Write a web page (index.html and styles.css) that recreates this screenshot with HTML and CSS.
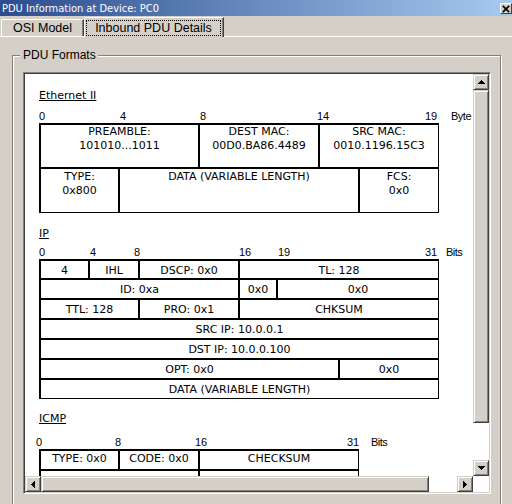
FILE: index.html
```html
<!DOCTYPE html>
<html>
<head>
<meta charset="utf-8">
<title>PDU Information at Device: PC0</title>
<link rel="stylesheet" href="styles.css">
</head>
<body>
<div class="titlebar">
  <span class="title">PDU Information at Device: PC0</span>
  <span class="close"><svg width="8" height="8" viewBox="0 0 8 8"><path d="M0.8 0.8 L7.2 7.2 M7.2 0.8 L0.8 7.2" stroke="#000" stroke-width="1.7"/></svg></span>
</div>
<div class="tabs">
  <div class="tab">OSI Model</div>
  <div class="tab tab-active"><span class="focus">Inbound PDU Details</span></div>
</div>
<div class="panel">
  <div class="group">
    <span class="legend">PDU Formats</span>
    <div class="scrollpane">
      <div class="viewport">
        <div class="content">
          <div class="section-title st-eth">Ethernet II</div>
          <div class="ruler ruler-eth"><span>0</span><span>4</span><span>8</span><span>14</span><span>19</span><span class="unit">Byte</span></div>
          <div class="pdu pdu-eth">
            <div class="row eth-r1"><div class="cell">PREAMBLE:<br>101010...1011</div><div class="cell">DEST MAC:<br>00D0.BA86.4489</div><div class="cell">SRC MAC:<br>0010.1196.15C3</div></div>
            <div class="row eth-r2"><div class="cell">TYPE:<br>0x800</div><div class="cell">DATA (VARIABLE LENGTH)</div><div class="cell">FCS:<br>0x0</div></div>
          </div>

          <div class="section-title st-ip">IP</div>
          <div class="ruler ruler-ip"><span>0</span><span>4</span><span>8</span><span>16</span><span>19</span><span>31</span><span class="unit">Bits</span></div>
          <div class="pdu pdu-ip">
            <div class="row ip-r1 first"><div class="cell">4</div><div class="cell">IHL</div><div class="cell">DSCP: 0x0</div><div class="cell">TL: 128</div></div>
            <div class="row ip-r2"><div class="cell">ID: 0xa</div><div class="cell">0x0</div><div class="cell">0x0</div></div>
            <div class="row ip-r3"><div class="cell">TTL: 128</div><div class="cell">PRO: 0x1</div><div class="cell">CHKSUM</div></div>
            <div class="row ip-full"><div class="cell">SRC IP: 10.0.0.1</div></div>
            <div class="row ip-full"><div class="cell">DST IP: 10.0.0.100</div></div>
            <div class="row ip-r6"><div class="cell">OPT: 0x0</div><div class="cell">0x0</div></div>
            <div class="row ip-full"><div class="cell">DATA (VARIABLE LENGTH)</div></div>
          </div>

          <div class="section-title st-icmp">ICMP</div>
          <div class="ruler ruler-icmp"><span>0</span><span>8</span><span>16</span><span>31</span><span class="unit">Bits</span></div>
          <div class="pdu pdu-icmp">
            <div class="row icmp-r1"><div class="cell">TYPE: 0x0</div><div class="cell">CODE: 0x0</div><div class="cell">CHECKSUM</div></div>
            <div class="row icmp-r2"><div class="cell"></div><div class="cell"></div></div>
          </div>
        </div>
      </div>
      <div class="vscroll">
        <div class="btn3d sbtn"><svg width="7" height="4" viewBox="0 0 7 4"><path d="M3 0h1v1H3zM2 1h3v1H2zM1 2h5v1H1zM0 3h7v1H0z"/></svg></div>
        <div class="btn3d vthumb"></div>
        <div class="track"></div>
        <div class="btn3d sbtn"><svg width="7" height="4" viewBox="0 0 7 4"><path d="M0 0h7v1H0zM1 1h5v1H1zM2 2h3v1H2zM3 3h1v1H3z"/></svg></div>
      </div>
      <div class="hscroll">
        <div class="btn3d sbtn"><svg width="4" height="7" viewBox="0 0 4 7"><path d="M3 0h1v7H3zM2 1h1v5H2zM1 2h1v3H1zM0 3h1v1H0z"/></svg></div>
        <div class="btn3d hthumb"></div>
        <div class="track"></div>
        <div class="btn3d sbtn"><svg width="4" height="7" viewBox="0 0 4 7"><path d="M0 0h1v7H0zM1 1h1v5H1zM2 2h1v3H2zM3 3h1v1H3z"/></svg></div>
      </div>
      <div class="corner"></div>
    </div>
  </div>
</div>
</body>
</html>
```

FILE: styles.css
```css
* { box-sizing: border-box; }
html, body { margin: 0; padding: 0; }
body {
  width: 512px;
  height: 504px;
  overflow: hidden;
  background: #d4d0c8;
  font-family: "DejaVu Sans", Verdana, sans-serif;
  font-size: 11px;
  color: #000;
}

/* title bar */
.titlebar {
  height: 16px;
  display: flex;
  justify-content: space-between;
  align-items: flex-start;
  background: linear-gradient(to right, #2b4c8e, #a6caf0);
}
.title {
  font-family: "DejaVu Sans Condensed", "Liberation Sans", Arial, sans-serif;
  font-size: 11px;
  line-height: 14px;
  color: #fff;
  padding: 2px 0 0 2px;
  white-space: nowrap;
}
.close {
  width: 12px;
  height: 11px;
  margin-top: 3px;
  display: flex;
  align-items: center;
  justify-content: center;
  background: #d4d0c8;
  border: 1px solid;
  border-color: #fff #404040 #404040 #fff;
}

/* tabs */
.tabs {
  display: flex;
  align-items: flex-end;
  height: 21px;
  padding-left: 1px;
  border-bottom: 1px solid #fff;
  font-family: "Liberation Sans", Arial, sans-serif;
  font-size: 12.5px;
}
.tab {
  width: 83px;
  height: 17px;
  border-top: 1px solid #fff;
  border-left: 1px solid #fff;
  border-right: 1px solid #404040;
  border-top-left-radius: 2px;
  box-shadow: inset -1px 0 0 #808080;
  text-align: center;
  line-height: 15px;
  padding-top: 1px;
  white-space: nowrap;
}
.tab-active {
  position: relative;
  width: 140px;
  height: 20px;
  margin-bottom: -1px;
  background: #d4d0c8;
  padding: 2px 2px 0 1px;
  line-height: 14px;
}
.focus {
  display: block;
  height: 16px;
  border: 1px dotted #000;
}

/* group box */
.panel {
  padding: 18px 0 0 12px;
}
.group {
  position: relative;
  width: 489px;
  height: 470px;
  border: 1px solid #808080;
  box-shadow: 1px 1px 0 #fff, inset 1px 1px 0 #fff;
  padding: 16px 0 0 10px;
}
.legend {
  position: absolute;
  left: 7px;
  top: -8px;
  padding: 0 2px 0 3px;
  background: #d4d0c8;
  font-family: "Liberation Sans", Arial, sans-serif;
  font-size: 12px;
  line-height: 14px;
  white-space: nowrap;
}

/* scroll pane */
.scrollpane {
  width: 468px;
  height: 422px;
  border: 1px solid;
  border-color: #808080 #fff #fff #808080;
  box-shadow: inset 1px 1px 0 #404040, inset -1px -1px 0 #d4d0c8;
  padding: 1px;
  display: grid;
  grid-template-columns: 448px 16px;
  grid-template-rows: 402px 16px;
  background: #fff;
}
.viewport {
  overflow: hidden;
  background: #fff;
}
.content {
  padding: 15px 0 0 14px;
}

.btn3d {
  background: #d4d0c8;
  border: 1px solid;
  border-color: #d4d0c8 #404040 #404040 #d4d0c8;
  box-shadow: inset 1px 1px 0 #fff, inset -1px -1px 0 #808080;
}
.sbtn {
  width: 16px;
  height: 16px;
  flex: none;
  display: flex;
  align-items: center;
  justify-content: center;
}
.sbtn svg { display: block; fill: #000; }
.vscroll {
  display: flex;
  flex-direction: column;
}
.vthumb { height: 333px; flex: none; }
.hscroll {
  display: flex;
}
.hthumb { width: 388px; flex: none; }
.track { flex: 1; background: #fff; }
.corner { background: #fff; }

/* PDU content */
.section-title {
  line-height: 13px;
  text-decoration: underline;
  white-space: nowrap;
}
.st-ip { margin-top: 14px; }
.st-icmp { margin-top: 13px; }

.ruler {
  display: flex;
  font-family: "Liberation Sans", Arial, sans-serif;
  font-size: 11px;
  line-height: 13px;
  white-space: nowrap;
}
.ruler span { flex: none; }
.ruler .unit { letter-spacing: -0.5px; }

.ruler-eth { margin-top: 8px; }
.ruler-eth span:nth-child(1) { width: 81px; }
.ruler-eth span:nth-child(2) { width: 80px; }
.ruler-eth span:nth-child(3) { width: 117px; }
.ruler-eth span:nth-child(4) { width: 108px; }
.ruler-eth span:nth-child(5) { width: 26px; }

.ruler-ip { margin-top: 6px; }
.ruler-ip span:nth-child(1) { width: 51px; }
.ruler-ip span:nth-child(2) { width: 44px; }
.ruler-ip span:nth-child(3) { width: 105px; }
.ruler-ip span:nth-child(4) { width: 39px; }
.ruler-ip span:nth-child(5) { width: 147px; }
.ruler-ip span:nth-child(6) { width: 21px; }

.ruler-icmp { margin-top: 11px; margin-left: -3px; }
.ruler-icmp span:nth-child(1) { width: 79px; }
.ruler-icmp span:nth-child(2) { width: 80px; }
.ruler-icmp span:nth-child(3) { width: 152px; }
.ruler-icmp span:nth-child(4) { width: 24px; }

.pdu {
  width: 400px;
  border-top: 1px solid #000;
  border-left: 1px solid #000;
}
.pdu-icmp { width: 320px; }
.row { display: grid; }
.cell {
  border: 1px solid #000;
  text-align: center;
  white-space: nowrap;
  overflow: hidden;
}

.eth-r1 { grid-template-columns: 159px 120px 120px; height: 44px; }
.eth-r2 { grid-template-columns: 79px 240px 80px; height: 45px; }
.pdu-eth .cell { line-height: 14px; }
.eth-r2 .cell { padding-top: 1px; }

.pdu-ip .row { height: 20px; }
.pdu-ip .row.first { height: 19px; }
.pdu-ip .cell { line-height: 16px; padding-top: 2px; }
.ip-r1 { grid-template-columns: 49px 50px 100px 200px; }
.ip-r2 { grid-template-columns: 199px 38px 162px; }
.ip-r3 { grid-template-columns: 99px 100px 200px; }
.ip-full { grid-template-columns: 399px; }
.ip-r6 { grid-template-columns: 299px 100px; }

.pdu-icmp .row { height: 20px; }
.pdu-icmp .cell { line-height: 16px; }
.icmp-r1 { grid-template-columns: 79px 80px 160px; }
.icmp-r2 { grid-template-columns: 159px 160px; }
```
